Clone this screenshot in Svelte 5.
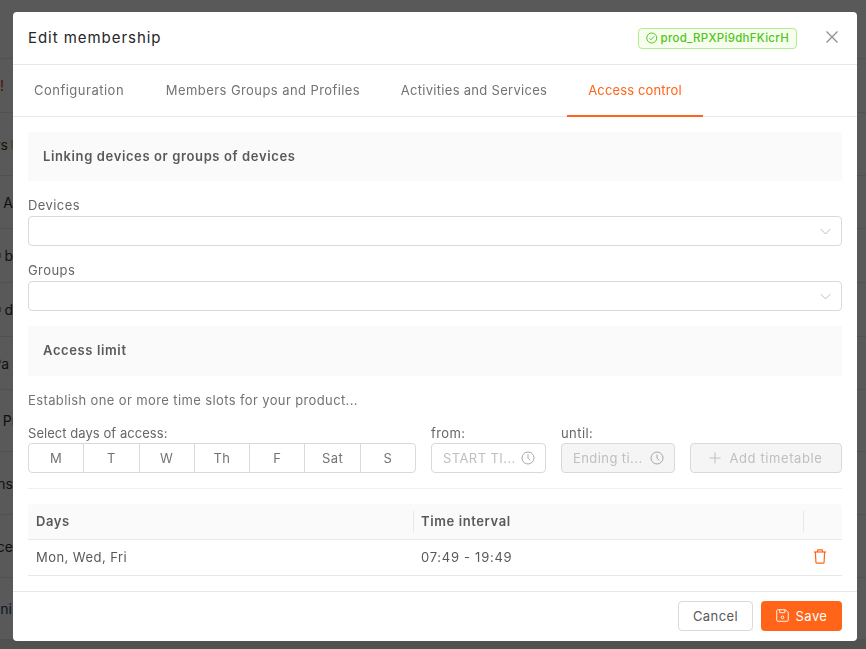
<script>
	let backgroundRows = [
		{ text: "", height: 59, end: 13, color: "#333" },
		{ text: "!", height: 54, end: 4, color: "#c0392b" },
		{ text: "rs", height: 63, end: 13, color: "#333", after: "#ffa940" },
		{ text: "A", height: 53, end: 13, color: "#333", before: "#1677ff" },
		{ text: "b", height: 54, end: 13, color: "#333", before: "#1677ff" },
		{ text: "d", height: 54, end: 13, color: "#333", before: "#1677ff" },
		{ text: "Pa", height: 53, end: 9, color: "#333" },
		{ text: "Pr", height: 62, end: 17, color: "#333" },
		{ text: "ns", height: 63, end: 13, color: "#333" },
		{ text: "ce", height: 63, end: 13, color: "#333" },
		{ text: "ni", height: 62, end: 12, color: "#1d3f72" }
	];

	let tabs = [
		{ label: "Configuration", width: 132, spacing: 0.5 },
		{ label: "Members Groups and Profiles", width: 236, spacing: 0.42 },
		{ label: "Activities and Services", width: 186, spacing: 0.29 },
		{ label: "Access control", width: 136, spacing: 0.14 }
	];

	let days = ["M", "T", "W", "Th", "F", "Sat", "S"];
</script>

<div class="page">
	{#each backgroundRows as row}
		<div class="page-row" style="height: {row.height}px">
			<div class="page-cell" style="width: {row.end}px; color: {row.color}">
				{#if row.before}
					<span class="dot before" style="background: {row.before}"></span>
				{/if}
				{row.text}
				{#if row.after}
					<span class="dot after" style="background: {row.after}"></span>
				{/if}
			</div>
		</div>
	{/each}
	<div class="page-end"></div>
</div>

<div class="overlay">
	<div class="modal">
		<div class="modal-header">
			<h1>Edit membership</h1>
			<div class="product-tag">
				<svg width="12" height="12" viewBox="0 0 12 12" fill="none" stroke="currentColor">
					<circle cx="6" cy="6" r="5.2" />
					<path d="M3.6 6.2 L5.3 7.8 L8.4 4.4" />
				</svg>
				prod_RPXPi9dhFKicrH
			</div>
			<button class="close" aria-label="Close">
				<svg width="14" height="14" viewBox="0 0 14 14" stroke="#8c8c8c" stroke-width="1.2">
					<path d="M1.5 1.5 L12.5 12.5 M12.5 1.5 L1.5 12.5" />
				</svg>
			</button>
		</div>

		<div class="tabs">
			{#each tabs as tab, i}
				<div
					class="tab"
					class:active={i === 3}
					style="width: {tab.width}px; letter-spacing: {tab.spacing}px"
				>
					{tab.label}
				</div>
			{/each}
		</div>

		<div class="content">
			<div class="section-title">Linking devices or groups of devices</div>

			<div class="label devices-label">Devices</div>
			<div class="select">
				<svg width="11" height="7" viewBox="0 0 11 7" fill="none" stroke="#bfbfbf">
					<path d="M.7 1 L5.5 6 L10.3 1" />
				</svg>
			</div>

			<div class="label groups-label">Groups</div>
			<div class="select">
				<svg width="11" height="7" viewBox="0 0 11 7" fill="none" stroke="#bfbfbf">
					<path d="M.7 1 L5.5 6 L10.3 1" />
				</svg>
			</div>

			<div class="section-title limit">Access limit</div>

			<p class="hint">Establish one or more time slots for your product...</p>

			<div class="slot-form">
				<div class="field days-field">
					<div class="label tight">Select days of access:</div>
					<div class="days">
						{#each days as day}
							<div class="day">{day}</div>
						{/each}
					</div>
				</div>
				<div class="field from-field">
					<div class="label">from:</div>
					<div class="time">
						<span>START TI...</span>
						<svg width="14" height="14" viewBox="0 0 14 14" fill="none" stroke="#a6a6a6">
							<circle cx="7" cy="7" r="6" />
							<path d="M7 3.5 V7.2 L9.2 9.4" />
						</svg>
					</div>
				</div>
				<div class="field until-field">
					<div class="label">until:</div>
					<div class="time disabled">
						<span>Ending ti...</span>
						<svg width="14" height="14" viewBox="0 0 14 14" fill="none" stroke="#a6a6a6">
							<circle cx="7" cy="7" r="6" />
							<path d="M7 3.5 V7.2 L9.2 9.4" />
						</svg>
					</div>
				</div>
				<button class="add" disabled>
					<svg width="12" height="12" viewBox="0 0 12 12" stroke="#bfbfbf">
						<path d="M6 .5 V11.5 M.5 6 H11.5" />
					</svg>
					Add timetable
				</button>
			</div>

			<div class="divider"></div>

			<div class="table-head">
				<div class="cell days-col">Days</div>
				<div class="cell interval-col">Time interval</div>
				<div class="cell action-col"></div>
			</div>
			<div class="table-row">
				<div class="cell days-col">Mon, Wed, Fri</div>
				<div class="cell interval-col">07:49 - 19:49</div>
				<div class="cell action-col">
					<svg width="14" height="15" viewBox="0 0 14 15" fill="none" stroke="#ff6418" stroke-width="1.2">
						<path d="M.8 3 H13.2" />
						<path d="M4.3 3 L4.9 .8 H9.1 L9.7 3" />
						<path d="M2.4 3 L2.9 13.2 Q3 14.2 4 14.2 H10 Q11 14.2 11.1 13.2 L11.6 3" />
					</svg>
				</div>
			</div>
		</div>

		<div class="modal-footer">
			<button class="cancel">Cancel</button>
			<button class="save">
				<svg width="13" height="13" viewBox="0 0 14 14" fill="none" stroke="white">
					<path d="M1.5 .8 H10.2 L13.2 3.8 V12.2 Q13.2 13.2 12.2 13.2 H1.8 Q.8 13.2 .8 12.2 V1.5 Z" />
					<path d="M4 1 V4 H9.5 V1" />
					<circle cx="7" cy="9" r="1.4" />
				</svg>
				Save
			</button>
		</div>
	</div>
</div>

<style>
	:global(body) {
		margin: 0;
		font-family: Inter, "Open Sans", sans-serif;
		background: #fff;
		overflow: hidden;
	}

	.page {
		height: 649px;
		overflow: hidden;
	}

	.page-row {
		box-sizing: border-box;
		display: flex;
		align-items: center;
		border-bottom: 1px solid #e8e8e8;
		font-size: 14px;
		white-space: nowrap;
	}

	.page-cell {
		display: flex;
		align-items: center;
		justify-content: flex-end;
	}

	.dot {
		flex: none;
		opacity: 0.6;
	}

	.dot.before {
		width: 2px;
		height: 5px;
		margin-right: 3px;
	}

	.dot.after {
		width: 2px;
		height: 9px;
		margin-left: 3px;
	}

	.page-end {
		height: 9px;
		background: #e8e8e8;
	}

	.overlay {
		position: fixed;
		inset: 0;
		background: rgba(0, 0, 0, 0.65);
		padding: 12px 9px 8px 13px;
	}

	.modal {
		width: 844px;
		height: 629px;
		background: white;
		border-radius: 4px;
		display: flex;
		flex-direction: column;
		color: #595959;
		font-size: 13px;
		letter-spacing: 0.42px;
	}

	.modal-header {
		height: 53px;
		flex: none;
		border-bottom: 1px solid #e8e8e8;
		display: flex;
		align-items: center;
		padding: 0 18px 2px 15px;
		box-sizing: border-box;
	}

	h1 {
		margin: 0;
		flex: 1;
		font-size: 15px;
		font-weight: 400;
		color: #262626;
		letter-spacing: 0.95px;
	}

	.product-tag {
		display: flex;
		align-items: center;
		gap: 3px;
		box-sizing: border-box;
		height: 21px;
		width: 159px;
		padding: 0 7px;
		margin-top: 2px;
		border: 1px solid #b0ef8f;
		border-radius: 4px;
		background: #f6ffed;
		color: #52c41a;
		font-size: 11.5px;
		font-weight: 500;
		letter-spacing: 0.28px;
		white-space: nowrap;
	}

	.close {
		border: none;
		background: none;
		padding: 0;
		margin-left: 28px;
		display: flex;
	}

	.tabs {
		display: flex;
		height: 52px;
		flex: none;
		box-sizing: border-box;
		border-bottom: 1px solid #e8e8e8;
	}

	.tab {
		padding: 0 0 2px;
		display: flex;
		align-items: center;
		justify-content: center;
		color: #737373;
		white-space: nowrap;
		margin-bottom: -1px;
		box-sizing: border-box;
	}

	.tab.active {
		color: #ff6418;
		border-bottom: 2px solid #ff6418;
		padding-bottom: 0;
	}

	.content {
		flex: 1;
		padding: 15px 15px 0;
	}

	.section-title {
		height: 49px;
		background: #fafafa;
		display: flex;
		align-items: center;
		padding: 0 0 2px 15px;
		box-sizing: border-box;
		font-weight: 600;
		letter-spacing: 0.62px;
	}

	.section-title.limit {
		height: 50px;
		margin-top: 15px;
	}

	.label {
		height: 18px;
		line-height: 18px;
		color: #666;
	}

	.label.tight {
		letter-spacing: 0.05px;
	}

	.devices-label {
		margin-top: 15px;
		margin-bottom: 2px;
	}

	.groups-label {
		margin-top: 15px;
		margin-bottom: 2px;
	}

	.select {
		box-sizing: border-box;
		height: 30px;
		border: 1px solid #d9d9d9;
		border-radius: 4px;
		display: flex;
		align-items: center;
		justify-content: flex-end;
		padding-right: 10px;
	}

	.hint {
		margin: 15px 0 0;
		height: 18px;
		line-height: 18px;
		color: #737373;
		letter-spacing: 0.38px;
	}

	.slot-form {
		display: flex;
		align-items: flex-end;
		gap: 15px;
		margin-top: 15px;
	}

	.days-field {
		width: 388px;
	}

	.from-field {
		width: 115px;
	}

	.until-field {
		width: 114px;
	}

	.days {
		display: flex;
		box-sizing: border-box;
		height: 30px;
		border: 1px solid #d9d9d9;
		border-radius: 4px;
		margin-top: 1px;
	}

	.day {
		flex: 1;
		display: flex;
		align-items: center;
		justify-content: center;
		border-left: 1px solid #d9d9d9;
		color: #737373;
	}

	.day:first-child {
		border-left: none;
	}

	.time {
		box-sizing: border-box;
		height: 30px;
		margin-top: 1px;
		border: 1px solid #d9d9d9;
		border-radius: 4px;
		display: flex;
		align-items: center;
		justify-content: space-between;
		padding: 0 10px 0 11px;
		color: #bfbfbf;
		white-space: nowrap;
	}

	.time.disabled {
		background: #f5f5f5;
	}

	.add {
		flex: 1;
		height: 30px;
		box-sizing: border-box;
		border: 1px solid #d9d9d9;
		border-radius: 4px;
		background: #f5f5f5;
		color: #bfbfbf;
		font: inherit;
		letter-spacing: 0.6px;
		display: flex;
		align-items: center;
		justify-content: center;
		gap: 8px;
	}

	.divider {
		height: 1px;
		background: #efefef;
		margin: 15px 0;
	}

	.table-head,
	.table-row {
		display: flex;
		align-items: center;
		box-sizing: border-box;
		border-bottom: 1px solid #e8e8e8;
	}

	.table-head {
		height: 36px;
		background: #fafafa;
		font-weight: 600;
		border-radius: 4px 4px 0 0;
		letter-spacing: 0.6px;
	}

	.table-head .interval-col {
		padding-left: 7px;
	}

	.table-head .days-col {
		padding-bottom: 2px;
	}

	.table-head .interval-col {
		padding-bottom: 2px;
	}

	.table-row {
		height: 36px;
		letter-spacing: 0.45px;
		padding-bottom: 2px;
	}

	.cell {
		box-sizing: border-box;
		padding: 0 8px;
	}

	.days-col {
		width: 385px;
	}

	.table-row .days-col {
		width: 385px;
		flex: none;
	}

	.table-row .interval-col {
		letter-spacing: 0.72px;
	}

	.interval-col {
		width: 390px;
	}

	.action-col {
		flex: 1;
		display: flex;
		justify-content: center;
		padding-right: 14px;
	}

	.table-head .cell + .cell {
		border-left: 1px solid #e8e8e8;
		height: 21px;
		line-height: 21px;
	}

	.modal-footer {
		height: 50px;
		flex: none;
		box-sizing: border-box;
		border-top: 1px solid #e8e8e8;
		display: flex;
		justify-content: flex-end;
		align-items: center;
		gap: 8px;
		padding: 0 15px 2px;
	}

	.modal-footer button {
		box-sizing: border-box;
		height: 30px;
		border-radius: 4px;
		font: inherit;
		letter-spacing: inherit;
	}

	.cancel {
		width: 75px;
		border: 1px solid #d9d9d9;
		background: white;
		color: #595959;
	}

	.save {
		width: 81px;
		border: none;
		background: #ff6418;
		color: white;
		display: flex;
		align-items: center;
		justify-content: center;
		gap: 7px;
	}
</style>
